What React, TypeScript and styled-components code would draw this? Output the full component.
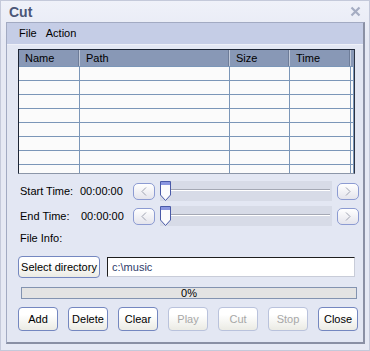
import React from "react";
import styled, { createGlobalStyle, css } from "styled-components";

const GlobalStyle = createGlobalStyle`
	html, body {
		margin: 0;
		padding: 0;
		background: #e8ebf5;
	}
	*, *::before, *::after {
		box-sizing: border-box;
	}
	body {
		font-family: "Liberation Sans", Arial, sans-serif;
		font-size: 11px;
		color: #000;
	}
`;

const Window = styled.div`
	width: 370px;
	height: 351px;
	border: 1px solid #c4c9da;
	background: linear-gradient(#eff1f9, #e6e9f4 40px);
	display: flex;
	flex-direction: column;
`;

const TitleBar = styled.div`
	height: 21px;
	display: flex;
	align-items: center;
	justify-content: space-between;
	padding: 0 8px 0 8px;
`;

const Title = styled.div`
	font-size: 14px;
	font-weight: bold;
	color: #4b5677;
	margin-top: 1px;
`;

const Panel = styled.div`
	margin: 0 4px 6px 5px;
	flex: 1;
	border-top: 1px solid #a2aac2;
	border-left: 1px solid #a2aac2;
	border-right: 2px solid #8a90a4;
	border-bottom: 2px solid #8a90a4;
	background: #e3e7f3;
	display: flex;
	flex-direction: column;
`;

const MenuBar = styled.div`
	height: 22px;
	background: #c5cde6;
	border-bottom: 1px solid #eef0f8;
	display: flex;
	align-items: center;
	padding-left: 12px;
	gap: 9px;
`;

const MenuItem = styled.span`
	line-height: 21px;
`;

const Content = styled.div`
	padding: 0 4px 0 11px;
	display: flex;
	flex-direction: column;
`;

const Table = styled.div`
	margin-top: 4px;
	width: 337px;
	height: 125px;
	border-top: 1px solid #1d2535;
	border-left: 1px solid #1d2535;
	border-right: 1px solid #2c3444;
	border-bottom: 1px solid #8c96a8;
	background: #fbfbfb;
	overflow: hidden;
`;

const cols = "61px 150px 60px 61px 1fr";

const HeaderRow = styled.div`
	display: grid;
	grid-template-columns: ${cols};
	height: 17px;
	background: #8898b6;
	border-bottom: 1px solid #7b96b8;
`;

const HeaderCell = styled.div`
	padding-left: 6px;
	line-height: 16px;
	border-right: 1px solid #c3cbdb;
	box-shadow: inset -1px 0 0 #6d7c98;
`;

const BodyRow = styled.div`
	display: grid;
	grid-template-columns: ${cols};
	height: 14px;
	border-bottom: 1px solid #7b96b8;
`;

const BodyCell = styled.div`
	border-right: 1px solid #7b96b8;
`;

const TimeRow = styled.div<{ $top: number }>`
	margin-top: ${(p) => p.$top}px;
	height: 18px;
	display: flex;
	align-items: center;
`;

const Label = styled.span<{ $w: number }>`
	width: ${(p) => p.$w}px;
	flex: none;
	padding-left: 2px;
	white-space: nowrap;
`;

const TimeText = styled.span<{ $w: number }>`
	width: ${(p) => p.$w}px;
	flex: none;
	white-space: nowrap;
`;

const TimeSlider = styled.div`
	flex: 1;
	display: flex;
	align-items: center;
`;

const ArrowButton = styled.button`
	width: 22px;
	height: 17px;
	flex: none;
	padding: 0;
	border: 1px solid #8c9bd2;
	border-radius: 5px;
	background: linear-gradient(#ffffff, #e4e4ec);
	display: flex;
	align-items: center;
	justify-content: center;
`;

const Track = styled.div`
	flex: 1;
	height: 20px;
	margin: 0 5px;
	position: relative;
	background: #d7dbe7;
	&::before {
		content: "";
		position: absolute;
		left: 2px;
		right: 2px;
		top: 8px;
		height: 1px;
		background: #a4a8b4;
		box-shadow: 0 1px 0 #ffffff;
	}
`;

const Thumb = styled.svg`
	position: absolute;
	left: 0;
	top: 0;
`;

const InfoLabel = styled.div`
	margin-top: 7px;
	height: 14px;
	padding-left: 2px;
`;

const DirRow = styled.div`
	margin-top: 10px;
	display: flex;
	align-items: center;
	gap: 7px;
	width: 337px;
`;

const buttonBase = css`
	font-family: "Liberation Sans", Arial, sans-serif;
	font-size: 11px;
	padding: 0;
	border-radius: 4px;
	background: linear-gradient(#ffffff 30%, #ebebe4);
	white-space: nowrap;
`;

const DirButton = styled.button`
	${buttonBase};
	width: 82px;
	height: 22px;
	border: 1px solid #7487c0;
	color: #000;
`;

const PathInput = styled.div`
	flex: 1;
	height: 20px;
	border-top: 1px solid #1e1e1e;
	border-left: 1px solid #1e1e1e;
	border-right: 1px solid #c8ccd8;
	border-bottom: 1px solid #c8ccd8;
	background: #fff;
	padding-left: 4px;
	line-height: 18px;
	color: #2e3c6a;
`;

const Progress = styled.div`
	margin: 9px 2px 0 3px;
	height: 12px;
	border: 1px solid #8393b0;
	background: #e3e3e3;
	text-align: center;
	font-size: 11px;
	line-height: 10px;
`;

const ButtonRow = styled.div`
	margin-top: 8px;
	display: flex;
	gap: 10px;
`;

const ActionButton = styled.button<{ $disabled?: boolean }>`
	${buttonBase};
	width: 40px;
	height: 24px;
	border: 1px solid ${(p) => (p.$disabled ? "#b9c2dc" : "#7487c0")};
	color: ${(p) => (p.$disabled ? "#a7a7a7" : "#000")};
`;

const CloseIcon = () => (
	<svg width="11" height="11" viewBox="0 0 11 11">
		<path d="M1.5 1.5 L9.5 9.5 M9.5 1.5 L1.5 9.5" stroke="#a5acc2" strokeWidth="2.2" />
	</svg>
);

const Chevron = ({ dir }: { dir: "left" | "right" }) => (
	<svg width="6" height="9" viewBox="0 0 6 9">
		<polyline
			points={dir === "left" ? "5,0.5 1,4.5 5,8.5" : "1,0.5 5,4.5 1,8.5"}
			fill="none"
			stroke="#9ea2b0"
			strokeWidth="1"
		/>
	</svg>
);

const SliderThumb = () => (
	<Thumb width="11" height="20" viewBox="0 0 11 20">
		<path d="M0.5 0.5 H10.5 V14 L5.5 19.5 L0.5 14 Z" fill="#fbfbfd" stroke="#4a5aa8" />
		<rect x="1" y="1" width="9" height="3" fill="#8a96e0" />
	</Thumb>
);

const Slider = () => (
	<TimeSlider>
		<ArrowButton>
			<Chevron dir="left" />
		</ArrowButton>
		<Track>
			<SliderThumb />
		</Track>
		<ArrowButton>
			<Chevron dir="right" />
		</ArrowButton>
	</TimeSlider>
);

const columns = ["Name", "Path", "Size", "Time", ""];
const actions = [
	{ label: "Add" },
	{ label: "Delete" },
	{ label: "Clear" },
	{ label: "Play", disabled: true },
	{ label: "Cut", disabled: true },
	{ label: "Stop", disabled: true },
	{ label: "Close" },
];

export default function App() {
	return (
		<>
			<GlobalStyle />
			<Window>
				<TitleBar>
					<Title>Cut</Title>
					<CloseIcon />
				</TitleBar>
				<Panel>
					<MenuBar>
						<MenuItem>File</MenuItem>
						<MenuItem>Action</MenuItem>
					</MenuBar>
					<Content>
						<Table>
							<HeaderRow>
								{columns.map((c, i) => (
									<HeaderCell key={i}>{c}</HeaderCell>
								))}
							</HeaderRow>
							{Array.from({ length: 8 }).map((_, r) => (
								<BodyRow key={r}>
									{columns.map((_, i) => (
										<BodyCell key={i} />
									))}
								</BodyRow>
							))}
						</Table>
						<TimeRow $top={8}>
							<Label $w={62}>Start Time:</Label>
							<TimeText $w={53}>00:00:00</TimeText>
							<Slider />
						</TimeRow>
						<TimeRow $top={7}>
							<Label $w={63}>End Time:</Label>
							<TimeText $w={52}>00:00:00</TimeText>
							<Slider />
						</TimeRow>
						<InfoLabel>File Info:</InfoLabel>
						<DirRow>
							<DirButton>Select directory</DirButton>
							<PathInput>c:\music</PathInput>
						</DirRow>
						<Progress>0%</Progress>
						<ButtonRow>
							{actions.map((a) => (
								<ActionButton key={a.label} $disabled={a.disabled}>
									{a.label}
								</ActionButton>
							))}
						</ButtonRow>
					</Content>
				</Panel>
			</Window>
		</>
	);
}
